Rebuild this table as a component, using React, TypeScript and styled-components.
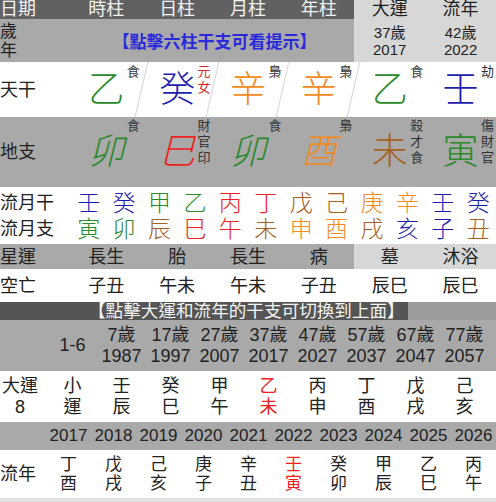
import React from "react";
import styled, { createGlobalStyle } from "styled-components";

const C = {
  green: "#2b8a2b",
  blue: "#1e1eae",
  orange: "#f28a1f",
  red: "#ee2222",
  brown: "#a6601f",
  ink: "#222",
};

const GRAY = "#a9a9a9";
const LIGHT = "#d7d7d7";
const DARK = "#616161";

const GlobalStyle = createGlobalStyle`
  html, body { margin: 0; padding: 0; background: #fff; }
  body {
    font-family: "Liberation Sans", "Noto Sans CJK TC", sans-serif;
    color: ${C.ink};
  }
`;

const Page = styled.div`
  width: 496px;
  height: 502px;
  display: flex;
  flex-direction: column;
  background: #e2e2e2;
  overflow: hidden;
`;

const Row7 = styled.div<{ $h: number; $bg?: string }>`
  display: grid;
  grid-template-columns: repeat(7, 1fr);
  height: ${(p) => p.$h}px;
  background: ${(p) => p.$bg ?? "#fff"};
  flex: none;
`;

const Cell = styled.div<{ $bg?: string; $span?: number; $start?: boolean; $slash?: boolean }>`
  position: relative;
  display: flex;
  align-items: center;
  justify-content: ${(p) => (p.$start ? "flex-start" : "center")};
  grid-column: span ${(p) => p.$span ?? 1};
  background: ${(p) => p.$bg ?? "transparent"};
  min-width: 0;
  &::before {
    content: "";
    display: ${(p) => (p.$slash ? "block" : "none")};
    position: absolute;
    left: -1px;
    top: 0;
    bottom: 0;
    width: 1px;
    background: #d4d4d4;
    transform: skewX(-13deg);
  }
`;

const HeadText = styled.span<{ $light?: boolean }>`
  font-size: 18px;
  line-height: 19px;
  color: ${(p) => (p.$light ? "#1e1e1e" : "#f2f2f2")};
`;

const Label = styled.span`
  font-size: 18px;
  line-height: 20px;
  white-space: nowrap;
`;

const StackLabel = styled.span`
  display: flex;
  flex-direction: column;
  font-size: 17px;
  line-height: 19px;
`;

const Hint = styled.span`
  font-size: 17px;
  color: #2a2add;
  font-weight: 600;
  margin-left: 4px;
`;

const AgeStack = styled.span`
  display: flex;
  flex-direction: column;
  align-items: center;
  font-size: 15px;
  line-height: 17px;
`;

const Big = styled.span<{ $c: string; $italic?: boolean }>`
  font-size: 36px;
  line-height: 1;
  font-weight: 300;
  color: ${(p) => p.$c};
  font-style: ${(p) => (p.$italic ? "italic" : "normal")};
`;

const Tag = styled.span<{ $c?: string; $top: number }>`
  position: absolute;
  top: ${(p) => p.$top}px;
  right: 2px;
  display: flex;
  flex-direction: column;
  font-size: 13px;
  line-height: 16px;
  color: ${(p) => p.$c ?? "#333"};
`;

const MonthBlock = styled.div`
  display: flex;
  flex-direction: column;
  padding: 3px 0 2px;
  background: #fff;
  flex: none;
`;

const MonthRow = styled.div`
  display: grid;
  grid-template-columns: 71px repeat(12, 1fr);
  height: 26px;
  align-items: center;
`;

const MonthChar = styled.span<{ $c: string }>`
  font-size: 23px;
  line-height: 26px;
  font-weight: 300;
  text-align: center;
  color: ${(p) => p.$c};
`;

const Band = styled.div`
  display: flex;
  height: 18px;
  flex: none;
  background: #9c9c9c;
`;

const BandLabel = styled.span`
  background: #555;
  color: #f4f4f4;
  font-size: 17.6px;
  line-height: 18px;
  padding-left: 88px;
  width: 320px;
  white-space: nowrap;
`;

const LuckGrid = styled.div<{ $h: number; $bg: string }>`
  display: grid;
  grid-template-columns: 48px repeat(9, 49px) 1fr;
  height: ${(p) => p.$h}px;
  background: ${(p) => p.$bg};
  align-items: center;
  flex: none;
`;

const YearGrid = styled.div<{ $h: number; $bg: string }>`
  display: grid;
  grid-template-columns: 46px repeat(10, 45px);
  height: ${(p) => p.$h}px;
  background: ${(p) => p.$bg};
  align-items: center;
  flex: none;
`;

const Pair = styled.span<{ $size: number; $lh: number; $c?: string }>`
  display: flex;
  flex-direction: column;
  align-items: center;
  font-size: ${(p) => p.$size}px;
  line-height: ${(p) => p.$lh}px;
  color: ${(p) => p.$c ?? C.ink};
  white-space: nowrap;
`;

const SideLabel = styled.span`
  display: flex;
  flex-direction: column;
  align-items: center;
  width: 40px;
  font-size: 18px;
  line-height: 21px;
`;

const YearNum = styled.span`
  font-size: 17px;
  text-align: center;
`;

const Rule = styled.div`
  flex: 1;
  background: #e2e2e2;
`;

type Pillar = { ch: string; c: string; tag: string[]; tagC?: string };

const stems: Pillar[] = [
  { ch: "乙", c: C.green, tag: ["食"] },
  { ch: "癸", c: C.blue, tag: ["元", "女"], tagC: "#d42a2a" },
  { ch: "辛", c: C.orange, tag: ["梟"] },
  { ch: "辛", c: C.orange, tag: ["梟"] },
  { ch: "乙", c: C.green, tag: ["食"] },
  { ch: "壬", c: C.blue, tag: ["劫"] },
];

const branches: Pillar[] = [
  { ch: "卯", c: C.green, tag: ["食"] },
  { ch: "巳", c: C.red, tag: ["財", "官", "印"] },
  { ch: "卯", c: C.green, tag: ["食"] },
  { ch: "酉", c: C.orange, tag: ["梟"] },
  { ch: "未", c: C.brown, tag: ["殺", "才", "食"] },
  { ch: "寅", c: C.green, tag: ["傷", "財", "官"] },
];

const monthStems: [string, string][] = [
  ["壬", C.blue], ["癸", C.blue], ["甲", C.green], ["乙", C.green],
  ["丙", C.red], ["丁", C.red], ["戊", C.brown], ["己", C.brown],
  ["庚", C.orange], ["辛", C.orange], ["壬", C.blue], ["癸", C.blue],
];
const monthBranches: [string, string][] = [
  ["寅", C.green], ["卯", C.green], ["辰", C.brown], ["巳", C.red],
  ["午", C.red], ["未", C.brown], ["申", C.orange], ["酉", C.orange],
  ["戌", C.brown], ["亥", C.blue], ["子", C.blue], ["丑", C.brown],
];

const stars = ["長生", "胎", "長生", "病", "墓", "沐浴"];
const voids = ["子丑", "午未", "午未", "子丑", "辰巳", "辰巳"];

const luckAges = [
  ["7歲", "1987"], ["17歲", "1997"], ["27歲", "2007"], ["37歲", "2017"],
  ["47歲", "2027"], ["57歲", "2037"], ["67歲", "2047"], ["77歲", "2057"],
];
const luckPillars: [string, string, boolean][] = [
  ["小", "運", false], ["壬", "辰", false], ["癸", "巳", false], ["甲", "午", false],
  ["乙", "未", true], ["丙", "申", false], ["丁", "酉", false], ["戊", "戌", false],
  ["己", "亥", false],
];

const years = ["2017", "2018", "2019", "2020", "2021", "2022", "2023", "2024", "2025", "2026"];
const yearPillars: [string, string, boolean][] = [
  ["丁", "酉", false], ["戊", "戌", false], ["己", "亥", false], ["庚", "子", false],
  ["辛", "丑", false], ["壬", "寅", true], ["癸", "卯", false], ["甲", "辰", false],
  ["乙", "巳", false], ["丙", "午", false],
];

export default function App() {
  return (
    <>
      <GlobalStyle />
      <Page>
        <Row7 $h={19} $bg={DARK}>
          <Cell $start><HeadText>日期</HeadText></Cell>
          <Cell><HeadText>時柱</HeadText></Cell>
          <Cell><HeadText>日柱</HeadText></Cell>
          <Cell><HeadText>月柱</HeadText></Cell>
          <Cell><HeadText>年柱</HeadText></Cell>
          <Cell $bg={LIGHT}><HeadText $light>大運</HeadText></Cell>
          <Cell $bg={LIGHT}><HeadText $light>流年</HeadText></Cell>
        </Row7>

        <Row7 $h={43} $bg={GRAY}>
          <Cell $start><StackLabel><span>歲</span><span>年</span></StackLabel></Cell>
          <Cell $span={4}><Hint>【點擊六柱干支可看提示】</Hint></Cell>
          <Cell $bg={LIGHT}><AgeStack><span>37歲</span><span>2017</span></AgeStack></Cell>
          <Cell $bg={LIGHT}><AgeStack><span>42歲</span><span>2022</span></AgeStack></Cell>
        </Row7>

        <Row7 $h={55} $bg="#fff">
          <Cell $start><Label>天干</Label></Cell>
          {stems.map((s, i) => (
            <Cell key={i} $slash={i >= 1 && i <= 4}>
              <Big $c={s.c}>{s.ch}</Big>
              <Tag $top={2} $c={s.tagC}>{s.tag.map((t, j) => <span key={j}>{t}</span>)}</Tag>
            </Cell>
          ))}
        </Row7>

        <Row7 $h={70} $bg={GRAY}>
          <Cell $start><Label>地支</Label></Cell>
          {branches.map((s, i) => (
            <Cell key={i}>
              <Big $c={s.c} $italic={i < 4}>{s.ch}</Big>
              <Tag $top={1}>{s.tag.map((t, j) => <span key={j}>{t}</span>)}</Tag>
            </Cell>
          ))}
        </Row7>

        <MonthBlock>
          <MonthRow>
            <Label>流月干</Label>
            {monthStems.map(([ch, c], i) => <MonthChar key={i} $c={c}>{ch}</MonthChar>)}
          </MonthRow>
          <MonthRow>
            <Label>流月支</Label>
            {monthBranches.map(([ch, c], i) => <MonthChar key={i} $c={c}>{ch}</MonthChar>)}
          </MonthRow>
        </MonthBlock>

        <Row7 $h={25} $bg={GRAY}>
          <Cell $start><Label>星運</Label></Cell>
          {stars.map((s, i) => (
            <Cell key={i} $bg={i >= 4 ? LIGHT : undefined}><Label>{s}</Label></Cell>
          ))}
        </Row7>

        <Row7 $h={33} $bg="#fff">
          <Cell $start><Label>空亡</Label></Cell>
          {voids.map((s, i) => <Cell key={i}><Label>{s}</Label></Cell>)}
        </Row7>

        <Band>
          <BandLabel>【點擊大運和流年的干支可切換到上面】</BandLabel>
        </Band>

        <LuckGrid $h={51} $bg={GRAY}>
          <span />
          <Pair $size={18} $lh={21}>1-6</Pair>
          {luckAges.map(([a, y], i) => (
            <Pair key={i} $size={18} $lh={21}><span>{a}</span><span>{y}</span></Pair>
          ))}
        </LuckGrid>

        <LuckGrid $h={51} $bg="#fff">
          <SideLabel><span>大運</span><span>8</span></SideLabel>
          {luckPillars.map(([a, b, hot], i) => (
            <Pair key={i} $size={18} $lh={21} $c={hot ? C.red : C.ink}><span>{a}</span><span>{b}</span></Pair>
          ))}
        </LuckGrid>

        <YearGrid $h={28} $bg={GRAY}>
          <span />
          {years.map((y) => <YearNum key={y}>{y}</YearNum>)}
        </YearGrid>

        <YearGrid $h={48} $bg="#fff">
          <Label>流年</Label>
          {yearPillars.map(([a, b, hot], i) => (
            <Pair key={i} $size={17} $lh={19} $c={hot ? C.red : C.ink}><span>{a}</span><span>{b}</span></Pair>
          ))}
        </YearGrid>
        <Rule />
      </Page>
    </>
  );
}
